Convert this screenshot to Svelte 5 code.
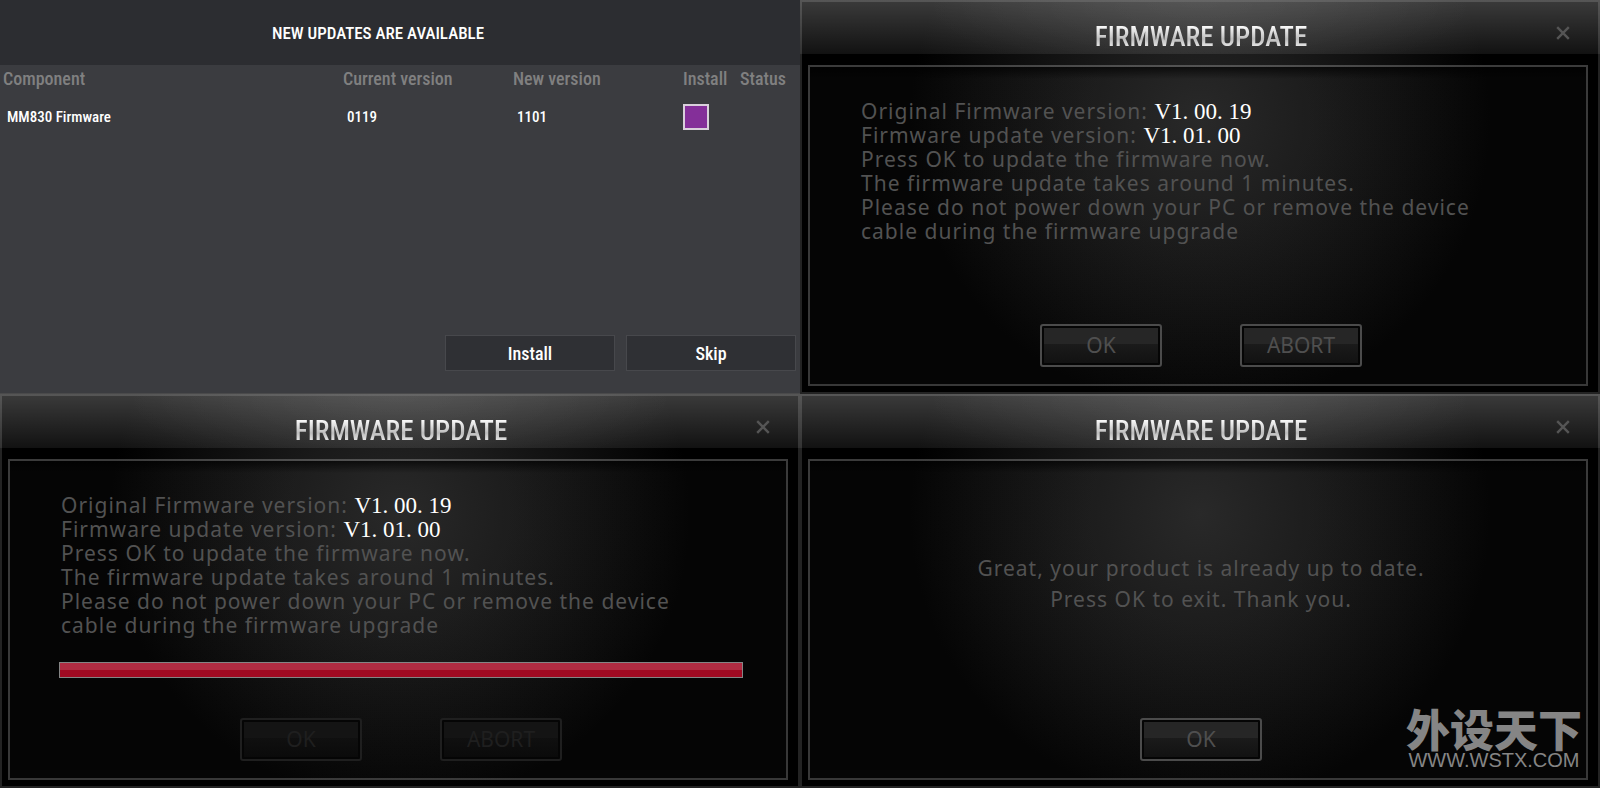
<script>
  let installChecked = $state(true);

  const updates = [{ component: 'MM830 Firmware', current: '0119', next: '1101' }];
</script>

{#snippet titleBar()}
  <header class="title-bar">
    <h2>FIRMWARE UPDATE</h2>
    <button class="close" type="button" aria-label="Close">
      <svg viewBox="0 0 14 14" aria-hidden="true"><path d="M1.2 1.2 12.8 12.8M12.8 1.2 1.2 12.8" /></svg>
    </button>
  </header>
{/snippet}

{#snippet instructions()}
  <div class="message">
    <p>Original Firmware version: <span class="version">V1. 00. 19</span></p>
    <p>Firmware update version: <span class="version">V1. 01. 00</span></p>
    <p>Press OK to update the firmware now.</p>
    <p>The firmware update takes around 1 minutes.</p>
    <p>Please do not power down your PC or remove the device<br />cable during the firmware upgrade</p>
  </div>
{/snippet}

<main class="screens">
  <section class="updates">
    <header><h1>NEW UPDATES ARE AVAILABLE</h1></header>
    <table>
      <colgroup>
        <col class="c-component" /><col class="c-version" /><col class="c-version" /><col class="c-install" /><col />
      </colgroup>
      <thead>
        <tr><th>Component</th><th>Current version</th><th>New version</th><th>Install</th><th>Status</th></tr>
      </thead>
      <tbody>
        {#each updates as item}
          <tr>
            <td>{item.component}</td>
            <td>{item.current}</td>
            <td>{item.next}</td>
            <td class="pick"><input type="checkbox" aria-label="Install" bind:checked={installChecked} /></td>
            <td></td>
          </tr>
        {/each}
      </tbody>
    </table>
    <div class="choices">
      <button type="button">Install</button>
      <button type="button">Skip</button>
    </div>
  </section>

  <section class="dialog">
    {@render titleBar()}
    <div class="body">
      <div class="frame">
        {@render instructions()}
        <div class="actions">
          <button type="button">OK</button>
          <button type="button">ABORT</button>
        </div>
      </div>
    </div>
  </section>

  <section class="dialog">
    {@render titleBar()}
    <div class="body">
      <div class="frame">
        {@render instructions()}
        <progress max="100" value="100" aria-label="Update progress"></progress>
        <div class="actions">
          <button type="button" disabled>OK</button>
          <button type="button" disabled>ABORT</button>
        </div>
      </div>
    </div>
  </section>

  <section class="dialog">
    {@render titleBar()}
    <div class="body">
      <div class="frame">
        <div class="message done">
          <p>Great, your product is already up to date.</p>
          <p>Press OK to exit. Thank you.</p>
        </div>
        <div class="actions">
          <button type="button">OK</button>
        </div>
      </div>
    </div>
    <div class="watermark">
      <span class="brand" lang="zh-CN">外设天下</span>
      <span class="site">WWW.WSTX.COM</span>
    </div>
  </section>
</main>

<style>
  :global(body) {
    margin: 0;
    background: #000;
  }

  .screens {
    display: grid;
    grid-template-columns: 1fr 1fr;
    grid-auto-rows: 1fr;
    min-height: 100vh;
  }

  h1,
  h2,
  p {
    margin: 0;
    font-weight: inherit;
  }

  button {
    font: inherit;
    cursor: pointer;
  }

  /* Update list */
  .updates {
    display: flex;
    flex-direction: column;
    box-sizing: border-box;
    border-bottom: 1px solid #4a4a4b;
    background: #3b3c40;
    color: #fff;
    font-family: 'Roboto Condensed', 'Liberation Sans Narrow', 'Liberation Sans', sans-serif;
  }

  .updates header {
    display: flex;
    align-items: center;
    justify-content: center;
    height: 65px;
    padding-right: 44px;
    background: #2c2d31;
  }

  .updates h1 {
    font-size: 17px;
    line-height: 24px;
    font-weight: 500;
  }

  table {
    width: 100%;
    table-layout: fixed;
    border-collapse: collapse;
  }

  .c-component {
    width: 340px;
  }

  .c-version {
    width: 170px;
  }

  .c-install {
    width: 57px;
  }

  th,
  td {
    padding: 0 0 0 3px;
    text-align: left;
    white-space: nowrap;
  }

  th {
    height: 26px;
    color: #808080;
    font-size: 18px;
    font-weight: 500;
  }

  td {
    height: 52px;
    padding-left: 7px;
    font-size: 15px;
    font-weight: 500;
  }

  .pick {
    padding-left: 3px;
  }

  .pick input {
    display: block;
    box-sizing: border-box;
    width: 26px;
    height: 26px;
    margin: 0;
    appearance: none;
    border: 2px solid #d9cfdb;
    background: #3b3c40;
  }

  .pick input:checked {
    background: #842f99;
  }

  .choices {
    display: flex;
    justify-content: flex-end;
    gap: 11px;
    margin-top: auto;
    padding: 0 4px 22px;
  }

  .choices button {
    width: 170px;
    height: 36px;
    padding: 0;
    border: 1px solid #47484c;
    background: #2f3034;
    color: #fff;
    font-size: 18px;
    font-weight: 500;
  }

  /* Firmware dialogs */
  .dialog {
    position: relative;
    display: flex;
    flex-direction: column;
    background: radial-gradient(circle 290px at 50% 120px, #252525, #1a1a1a 35%, #0d0d0d 68%, #040404 90%, #000);
    color: #525252;
    font-family: 'Noto Sans', sans-serif;
    font-size: 21px;
  }

  .title-bar {
    display: grid;
    grid-template-columns: 1fr auto 1fr;
    align-items: center;
    box-sizing: border-box;
    height: 54px;
    padding: 15px 28px 0 30px;
    border: 2px solid rgba(255, 255, 255, 0.14);
    border-bottom: 0;
    background:
      radial-gradient(280px 80px at 50% 0, rgba(255, 255, 255, 0.05), transparent) padding-box,
      linear-gradient(rgba(255, 255, 255, 0.23), rgba(255, 255, 255, 0.07)) border-box;
  }

  .title-bar h2 {
    grid-column: 2;
    background: linear-gradient(#fff 20%, #bdbdbd 55%, #fff 85%);
    background-clip: text;
    color: transparent;
    font-family: 'Roboto Condensed', 'Liberation Sans Narrow', 'Liberation Sans', sans-serif;
    font-size: 27px;
    font-weight: 500;
    line-height: 40px;
    white-space: nowrap;
  }

  .close {
    justify-self: end;
    display: flex;
    margin-bottom: 8px;
    padding: 0;
    border: 0;
    background: none;
  }

  .close svg {
    width: 14px;
    height: 14px;
    fill: none;
    stroke: #555;
    stroke-width: 2.4;
  }

  .body {
    flex: 1;
    display: flex;
    padding: 11px 10px 6px 6px;
    border: 2px solid #232323;
    border-top: 0;
  }

  .frame {
    flex: 1;
    display: flex;
    flex-direction: column;
    padding: 32px 43px 17px 49px;
    border: 2px solid #3a3a3a;
    border-image: linear-gradient(rgba(255, 255, 255, 0.23), rgba(255, 255, 255, 0.22)) 2;
    background:
      linear-gradient(rgba(0, 0, 0, 0.65), transparent 12px) padding-box,
      linear-gradient(rgba(255, 255, 255, 0.02), rgba(255, 255, 255, 0.02)) padding-box;
  }

  .message {
    padding-left: 2px;
    letter-spacing: 1px;
    line-height: 24px;
    white-space: nowrap;
  }

  .version {
    color: #fff;
    font-family: 'Liberation Serif', serif;
    font-size: 23px;
    letter-spacing: normal;
    line-height: 20px;
  }

  .done {
    margin-top: 60px;
    padding: 0;
    line-height: 31px;
    text-align: center;
  }

  progress {
    display: block;
    box-sizing: border-box;
    width: 100%;
    height: 16px;
    margin-top: 25px;
    appearance: none;
    border: 1px solid #858585;
    background: #111;
  }

  progress::-webkit-progress-bar {
    background: transparent;
  }

  progress::-webkit-progress-value {
    background: linear-gradient(#b02c42 50%, #a00a22 50%);
  }

  .actions {
    display: flex;
    justify-content: center;
    gap: 78px;
    margin-top: auto;
  }

  .actions button {
    box-sizing: border-box;
    width: 122px;
    height: 43px;
    padding: 0 0 2px;
    border: 2px solid #4b4b4b;
    border-radius: 3px;
    background: linear-gradient(#262626 45%, #1b1b1b 45%, #111);
    box-shadow: inset 0 0 0 2px #050505;
    color: #4f4f4f;
  }

  .actions button:disabled {
    border-color: #1f1f1f;
    background: linear-gradient(#141414 45%, #101010 45%, #0a0a0a);
    color: #1f1f1f;
  }

  .watermark {
    position: absolute;
    right: 18px;
    bottom: 18px;
    display: flex;
    flex-direction: column;
    align-items: center;
    color: #858585;
  }

  .brand {
    font-family: 'Noto Sans CJK SC', sans-serif;
    font-size: 44px;
    font-weight: 900;
    line-height: 44px;
  }

  .site {
    font-family: 'Liberation Sans', sans-serif;
    font-size: 20px;
    line-height: 20px;
  }
</style>
